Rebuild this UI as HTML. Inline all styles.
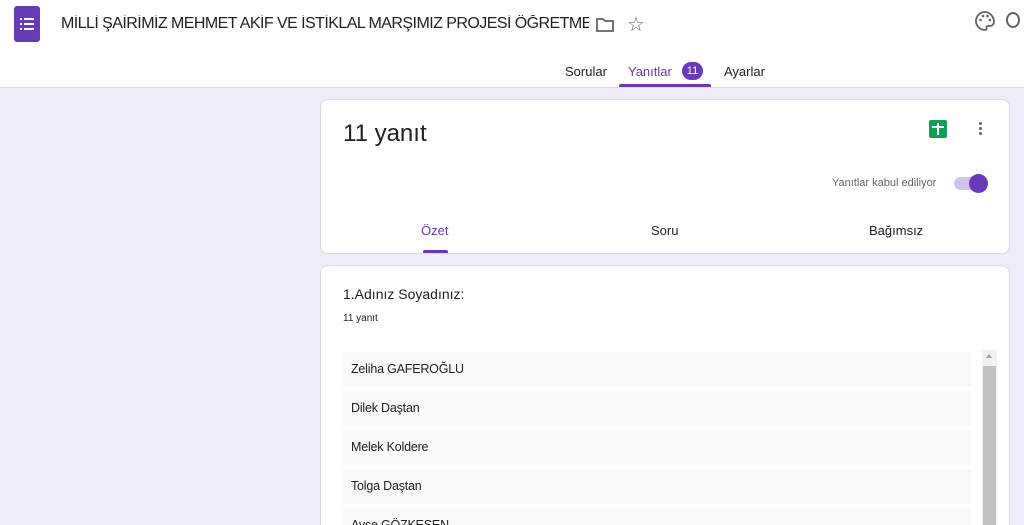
<!DOCTYPE html><html><head><meta charset="utf-8"><style>
*{margin:0;padding:0;box-sizing:border-box}
html{width:1024px;height:525px;overflow:hidden}
body{width:1024px;height:525px;overflow:hidden;background:#f0ebf8;font-family:"Liberation Sans",sans-serif;color:#202124;position:relative}
.hdr{position:absolute;left:0;top:0;width:1024px;height:88px;background:#fff;border-bottom:1px solid #e0e0e0}
.abs{position:absolute}
.card{position:absolute;background:#fff;border-radius:8px 8px 0 0;border:1px solid #dadce0;border-bottom:none;overflow:hidden}
.row{position:absolute;left:22px;width:628px;height:35px;background:#f8f9fa;font-size:12.5px;padding:10px 0 0 8px;color:#202124;letter-spacing:-0.2px}
</style></head><body>
<div class="hdr">
 <div class="abs" style="left:14px;top:6px;width:26px;height:36px;background:#673ab7;border-radius:3px"></div>
 <div class="abs" style="left:20px;top:17px;width:16px;height:14px">
  <div class="abs" style="left:0;top:1px;width:2px;height:2px;background:#fff"></div><div class="abs" style="left:4px;top:1px;width:10px;height:2px;background:#fff"></div>
  <div class="abs" style="left:0;top:6px;width:2px;height:2px;background:#fff"></div><div class="abs" style="left:4px;top:6px;width:10px;height:2px;background:#fff"></div>
  <div class="abs" style="left:0;top:11px;width:2px;height:2px;background:#fff"></div><div class="abs" style="left:4px;top:11px;width:10px;height:2px;background:#fff"></div>
 </div>
 <div class="abs" style="left:61px;top:15px;font-size:16px;color:#202124;letter-spacing:-0.55px;white-space:nowrap;width:528px;overflow:hidden">MİLLİ ŞAİRİMİZ MEHMET AKİF VE İSTİKLAL MARŞIMIZ PROJESİ ÖĞRETMENLERİ</div>
 <svg class="abs" style="left:595px;top:16px" width="20" height="18" viewBox="0 0 20 18"><path d="M2 3h6l2 2h8v10H2z" fill="none" stroke="#5f6368" stroke-width="1.8"/></svg>
 <div class="abs" style="left:627px;top:12px;font-size:20px;color:#5f6368">☆</div>
 <svg class="abs" style="left:974px;top:10px" width="22" height="22" viewBox="0 0 22 22"><path d="M11 2a9 9 0 1 0 0 18c1.5 0 2-1 1.5-2s0-2 1.5-2H16a4 4 0 0 0 4-4c0-5-4-10-9-10z" fill="none" stroke="#5f6368" stroke-width="1.8"/><circle cx="6.5" cy="10" r="1.3" fill="#5f6368"/><circle cx="9" cy="6" r="1.3" fill="#5f6368"/><circle cx="13.5" cy="6" r="1.3" fill="#5f6368"/><circle cx="16" cy="10" r="1.3" fill="#5f6368"/></svg>
 <div class="abs" style="left:1006px;top:12px;width:14px;height:16px;border:2px solid #5f6368;border-radius:50%"></div>
 <div class="abs" style="left:565px;top:64px;font-size:13px;color:#202124">Sorular</div>
 <div class="abs" style="left:628px;top:64px;font-size:13px;color:#673ab7">Yanıtlar</div>
 <div class="abs" style="left:682px;top:62px;width:21px;height:18px;border-radius:9px;background:#673ab7;color:#fff;font-size:11px;text-align:center;line-height:18px">11</div>
 <div class="abs" style="left:619px;top:84px;width:92px;height:3px;background:#673ab7;border-radius:2px 2px 0 0"></div>
 <div class="abs" style="left:724px;top:64px;font-size:13px;color:#202124">Ayarlar</div>
</div>
<div class="card" style="left:320px;top:99px;width:690px;height:155px;border-radius:8px;border-bottom:1px solid #dadce0">
 <div class="abs" style="left:22px;top:20px;font-size:24px;color:#202124">11 yanıt</div>
 <div class="abs" style="left:608px;top:20px;width:18px;height:18px;background:#0f9d58;border-radius:2px"></div>
 <div class="abs" style="left:616px;top:23px;width:2px;height:12px;background:#fff"></div>
 <div class="abs" style="left:611px;top:26px;width:12px;height:2px;background:#fff"></div>
 <div class="abs" style="left:658px;top:22px;width:3px;height:3px;background:#5f6368;border-radius:50%;box-shadow:0 5px 0 #5f6368,0 10px 0 #5f6368"></div>
 <div class="abs" style="left:511px;top:77px;font-size:11px;color:#5f6368">Yanıtlar kabul ediliyor</div>
 <div class="abs" style="left:633px;top:77px;width:30px;height:13px;border-radius:7px;background:#d1c4e9"></div>
 <div class="abs" style="left:648px;top:74px;width:19px;height:19px;border-radius:50%;background:#673ab7"></div>
 <div class="abs" style="left:100px;top:123px;font-size:13px;color:#673ab7">Özet</div>
 <div class="abs" style="left:102px;top:150px;width:25px;height:3px;background:#673ab7;border-radius:2px 2px 0 0"></div>
 <div class="abs" style="left:330px;top:123px;font-size:13px">Soru</div>
 <div class="abs" style="left:548px;top:123px;font-size:13px">Bağımsız</div>
</div>
<div class="card" style="left:320px;top:265px;width:690px;height:260px">
 <div class="abs" style="left:22px;top:20px;font-size:14px">1.Adınız Soyadınız:</div>
 <div class="abs" style="left:22px;top:47px;font-size:10px">11 yanıt</div>
 <div class="row" style="top:86px">Zeliha GAFEROĞLU</div>
 <div class="row" style="top:125px">Dilek Daştan</div>
 <div class="row" style="top:164px">Melek Koldere</div>
 <div class="row" style="top:203px">Tolga Daştan</div>
 <div class="row" style="top:242px;height:18px">Ayşe GÖZKESEN</div>
 <div class="abs" style="left:661px;top:84px;width:15px;height:176px;background:#f1f1f1"></div>
 <div class="abs" style="left:665px;top:88px;width:0;height:0;border-left:3px solid transparent;border-right:3px solid transparent;border-bottom:4px solid #a3a3a3"></div>
 <div class="abs" style="left:662px;top:100px;width:13px;height:160px;background:#c1c1c1"></div>
</div>
</body></html>
